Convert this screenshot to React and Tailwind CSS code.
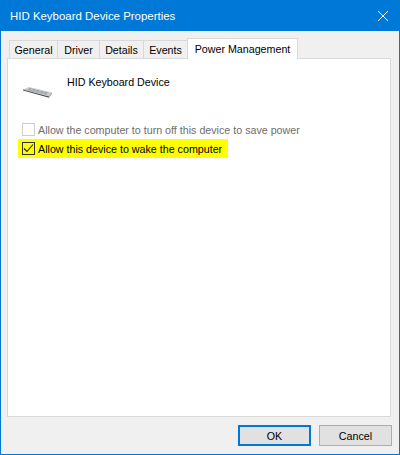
const font = "font-['Liberation_Sans',Arial,sans-serif]";

const tabs = [
  { name: "General", width: "w-[49px]" },
  { name: "Driver", width: "w-[43px]" },
  { name: "Details", width: "w-[45px]" },
  { name: "Events", width: "w-[45px]" },
];

function KeyboardIcon() {
  return (
    <svg width="32" height="32" viewBox="0 0 32 32" className="shrink-0 mt-[5px]">
      <path d="M1 10.5 L7 8 L30 13.5 L27 17.5 Z" fill="#c9ccd0" />
      <path d="M1 10.5 L27 17.5 L27 18.8 L1 11.5 Z" fill="#4c5055" />
      <path d="M27 17.5 L30 13.5 L30 14.6 L27 18.8 Z" fill="#7b7f84" />
      <path d="M7 9.5 L26 14 M5.5 10.5 L25 15.2 M9 9 L7 11.5 M13 10 L11 12.5 M17 11 L15 13.5 M21 12 L19 14.5 M25 13 L23 15.5" stroke="#8f9398" strokeWidth="0.6" fill="none" />
    </svg>
  );
}

export default function App() {
  return (
    <div className={`${font} w-[400px] h-[455px] flex flex-col border border-[#0078d7] bg-[#f0f0f0] text-[10.7px] leading-[16px] text-black`}>
      <div className="h-[30px] shrink-0 bg-[#0078d7] flex items-center justify-between pl-[9px] pr-[10px] text-white">
        <span className="text-[11.45px]">HID Keyboard Device Properties</span>
        <svg width="12" height="12" viewBox="0 0 12 12" stroke="white" strokeWidth="1" fill="none">
          <path d="M1 1 L11 11 M11 1 L1 11" />
        </svg>
      </div>

      <div className="flex-1 flex flex-col pl-[6px] pr-[8px] pt-[7px]">
        <div className="h-[21px] flex items-start pl-[2px] relative z-10 -mb-px">
          {tabs.map((t) => (
            <div
              key={t.name}
              className={`${t.width} h-[19px] mt-[2px] flex items-center justify-center border border-[#d9d9d9] -mr-px bg-[#f0f0f0]`}
            >
              {t.name}
            </div>
          ))}
          <div className="w-[111px] h-[21px] flex items-center justify-center border border-[#d9d9d9] border-b-0 bg-white">
            Power Management
          </div>
        </div>

        <div className="flex-1 bg-white border border-[#d9d9d9] pl-[14px] pt-[15px]">
          <div className="flex gap-[13px] h-[46px]">
            <KeyboardIcon />
            <span>HID Keyboard Device</span>
          </div>

          <div className="flex items-center gap-[3px] h-[19px] text-[#6d6d6d]">
            <span className="w-[13px] h-[13px] border border-[#cccccc] bg-white" />
            <span className="whitespace-nowrap">Allow the computer to turn off this device to save power</span>
          </div>

          <div className="-ml-[4px] flex items-center gap-[3px] h-[19px] w-[210px] pl-[4px] bg-[#ffff00]">
            <span className="w-[13px] h-[13px] border border-[#333333] flex items-center justify-center">
              <svg width="11" height="11" viewBox="0 0 11 11" fill="none" stroke="#1a1a1a" strokeWidth="1.1">
                <path d="M1 5.5 L4 8.5 L10 1.5" />
              </svg>
            </span>
            <span className="whitespace-nowrap">Allow this device to wake the computer</span>
          </div>
        </div>

        <div className="h-[37px] shrink-0 flex items-start justify-end gap-[8px] pt-[8px] -mr-[1px]">
          <button className="w-[73px] h-[21px] bg-[#e1e1e1] border-2 border-[#0078d7] flex items-center justify-center">OK</button>
          <button className="w-[73px] h-[21px] bg-[#e1e1e1] border border-[#adadad] flex items-center justify-center">Cancel</button>
        </div>
      </div>
    </div>
  );
}
